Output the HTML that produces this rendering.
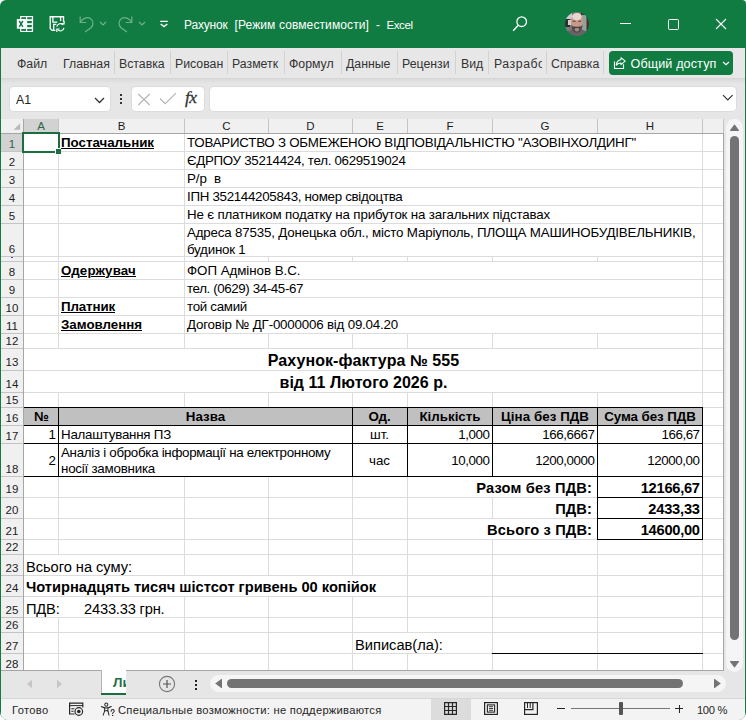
<!DOCTYPE html>
<html><head><meta charset="utf-8"><title>Excel</title>
<style>
html,body{margin:0;padding:0;}
body{width:746px;height:720px;overflow:hidden;background:#fff;font-family:"Liberation Sans",sans-serif;position:relative;}
#win{position:absolute;left:0;top:0;width:746px;height:720px;background:#107c41;border-radius:6px 4px 8px 8px;overflow:hidden;}
#win div, #win svg{box-sizing:border-box;}
</style></head><body><div id="win">
<div style="position:absolute;left:1px;top:48px;width:744px;height:672px;background:#e6e6e6;border-radius:0 0 6px 6px;"></div>
<div style="position:absolute;left:1px;top:48px;width:744px;height:30px;background:#e7e7e7;"></div>
<div style="position:absolute;left:1px;top:78px;width:744px;height:6px;background:linear-gradient(#d4d4d4,#dedede 35%,#e6e6e6);"></div>
<svg style="position:absolute;left:16px;top:15px" width="18" height="18" viewBox="0 0 18 18" shape-rendering="geometricPrecision">
<rect x="4.1" y="0.9" width="13" height="16" rx=".6" fill="#fff"/>
<g fill="#107c41">
<rect x="5.3" y="2.2" width="4.7" height="2"/><rect x="11.2" y="2.2" width="4.6" height="2"/>
<rect x="11.2" y="5.9" width="4.6" height="2.3"/>
<rect x="11.2" y="9.9" width="4.6" height="2.300"/>
<rect x="5.3" y="13.9" width="4.7" height="2"/><rect x="11.2" y="13.9" width="4.6" height="2"/>
</g>
<rect x=".8" y="4.1" width="8.7" height="9.6" fill="#fff"/>
<path d="M3.2 6l3.700 5.800M6.900 6l-3.700 5.800" stroke="#107c41" stroke-width="1.45" fill="none"/>
</svg>
<svg style="position:absolute;left:48px;top:15px" width="19" height="18" viewBox="0 0 19 18">
<path d="M7.400 15.350H4.200L2.200 13.400V1.750H15.550V7" fill="none" stroke="#fff" stroke-width="1.3"/>
<path d="M4.900 1.750V7.100H9.300M12.600 1.750V6" fill="none" stroke="#fff" stroke-width="1.3"/>
<path d="M5.700 15.300V9.300H8.300" fill="none" stroke="#fff" stroke-width="1.3"/>
<path d="M8.800 11.700A3.700 3.700 0 0 1 15.200 9.900M16 12.900A3.700 3.700 0 0 1 9.600 14.700" fill="none" stroke="#fff" stroke-width="1.15"/>
<path d="M16.100 5.900v2.900h-2.900M8.800 16.900v-2.900h2.900" fill="none" stroke="#fff" stroke-width="1.15"/>
</svg>
<svg style="position:absolute;left:78px;top:14px" width="18" height="20" viewBox="0 0 18 20">
<path d="M2.2 2.5v6h6" fill="none" stroke="#6fb08b" stroke-width="1.2"/>
<path d="M2.4 8.3C4.5 4.2 9.3 2.6 12.4 4.6c3.3 2.2 3.3 6.6 .6 9.2L7 18" fill="none" stroke="#6fb08b" stroke-width="1.2"/>
</svg>
<svg style="position:absolute;left:99px;top:21px" width="8" height="5" viewBox="0 0 8 5"><path d="M1 1l3 3 3-3" fill="none" stroke="#6fb08b" stroke-width="1.2"/></svg>
<svg style="position:absolute;left:116px;top:14px" width="18" height="20" viewBox="0 0 18 20">
<path d="M15.8 2.5v6h-6" fill="none" stroke="#6fb08b" stroke-width="1.2"/>
<path d="M15.6 8.3C13.5 4.2 8.7 2.6 5.6 4.6c-3.3 2.2-3.3 6.6-.6 9.2L11 18" fill="none" stroke="#6fb08b" stroke-width="1.2"/>
</svg>
<svg style="position:absolute;left:138px;top:21px" width="8" height="5" viewBox="0 0 8 5"><path d="M1 1l3 3 3-3" fill="none" stroke="#6fb08b" stroke-width="1.2"/></svg>
<svg style="position:absolute;left:159px;top:19px" width="10" height="9" viewBox="0 0 10 9">
<path d="M1.2 2.4h7.600" stroke="#fff" stroke-width="1.2"/><path d="M1.700 5l3.300 2.600 3.300-2.600" fill="none" stroke="#fff" stroke-width="1.5"/></svg>
<div style="position:absolute;top:15px;line-height:20px;height:20px;font-size:12px;white-space:pre;color:#fff;letter-spacing:-0.192px;left:184px;">Рахунок</div>
<div style="position:absolute;top:15px;line-height:20px;height:20px;font-size:12px;white-space:pre;color:#fff;letter-spacing:0.105px;left:234.5px;">[Режим совместимости]</div>
<div style="position:absolute;top:15px;line-height:20px;height:20px;font-size:12px;white-space:pre;color:#fff;left:376px;">-</div>
<div style="position:absolute;top:15px;line-height:20px;height:20px;font-size:11.6px;white-space:pre;color:#fff;letter-spacing:-0.472px;left:386.5px;">Excel</div>
<svg style="position:absolute;left:511px;top:15px" width="18" height="18" viewBox="0 0 18 18">
<circle cx="10.7" cy="6.7" r="4.8" fill="none" stroke="#fff" stroke-width="1.3"/><path d="M7.3 10.2L2.2 15.8" stroke="#fff" stroke-width="1.4"/></svg>
<svg style="position:absolute;left:565px;top:12px" width="24" height="24" viewBox="0 0 24 24">
<defs><clipPath id="av"><circle cx="12" cy="12" r="11.9"/></clipPath><filter id="bl" x="-20%" y="-20%" width="140%" height="140%"><feGaussianBlur stdDeviation="0.7"/></filter></defs>
<g clip-path="url(#av)"><g filter="url(#bl)">
<rect x="-2" y="-2" width="28" height="28" fill="#7b7a7c"/>
<rect x="-2" y="-2" width="9" height="9" fill="#c9ced3"/>
<rect x="-1" y="7" width="6" height="8" fill="#2e2e30"/>
<rect x="3" y="8" width="3" height="5" fill="#d0d0d0"/>
<rect x="17" y="2" width="5" height="17" fill="#93a19f"/>
<rect x="21.5" y="4" width="4" height="16" fill="#4d2f26"/>
<rect x="16" y="-1" width="6" height="4" fill="#3a3a3c"/>
<ellipse cx="12" cy="25" rx="13" ry="8" fill="#696468"/>
<ellipse cx="11.9" cy="10.5" rx="6.1" ry="9.6" fill="#c69a88"/>
<ellipse cx="11.9" cy="4.6" rx="4.8" ry="3.6" fill="#ead6ce"/>
<path d="M6.2 12.500c.2 5.500 2.600 8.200 5.700 8.200s5.500-2.700 5.700-8.200c-1 2-2.600 2.300-5.700 2.300s-4.700-.3-5.700-2.300z" fill="#54494a"/>
<ellipse cx="11.9" cy="17.6" rx="2.200" ry="2" fill="#a08c86"/>
<path d="M8.600 14.900c2 .9 4.600.9 6.600 0" stroke="#3c3030" stroke-width=".8" fill="none"/>
<path d="M7.600 9.300h3M13.200 9.300h3" stroke="#5a4038" stroke-width="1.100"/>
</g></g></svg>
<div style="position:absolute;left:620px;top:23px;width:11px;height:1px;background:#fff;"></div>
<div style="position:absolute;left:668px;top:19px;width:11px;height:11px;border:1px solid #fff;border-radius:1.5px"></div>
<svg style="position:absolute;left:715px;top:18px" width="12" height="12" viewBox="0 0 12 12"><path d="M1 1l10 10M11 1L1 11" stroke="#fff" stroke-width="1.1"/></svg>
<div style="position:absolute;top:54px;line-height:20px;height:20px;font-size:12.3px;white-space:pre;color:#333;left:17px;width:31px;overflow:hidden;">Файл</div>
<div style="position:absolute;top:54px;line-height:20px;height:20px;font-size:12.3px;white-space:pre;color:#333;left:63px;width:48px;overflow:hidden;">Главная</div>
<div style="position:absolute;top:54px;line-height:20px;height:20px;font-size:12.3px;white-space:pre;color:#333;left:119px;width:46px;overflow:hidden;">Вставка</div>
<div style="position:absolute;top:54px;line-height:20px;height:20px;font-size:12.3px;white-space:pre;color:#333;left:175px;width:50px;overflow:hidden;">Рисован</div>
<div style="position:absolute;top:54px;line-height:20px;height:20px;font-size:12.3px;white-space:pre;color:#333;left:232px;width:48px;overflow:hidden;">Разметк</div>
<div style="position:absolute;top:54px;line-height:20px;height:20px;font-size:12.3px;white-space:pre;color:#333;left:289px;width:48px;overflow:hidden;">Формул</div>
<div style="position:absolute;top:54px;line-height:20px;height:20px;font-size:12.3px;white-space:pre;color:#333;left:346px;width:46px;overflow:hidden;">Данные</div>
<div style="position:absolute;top:54px;line-height:20px;height:20px;font-size:12.3px;white-space:pre;color:#333;left:402px;width:49px;overflow:hidden;">Рецензи</div>
<div style="position:absolute;top:54px;line-height:20px;height:20px;font-size:12.3px;white-space:pre;color:#333;left:461px;width:23px;overflow:hidden;">Вид</div>
<div style="position:absolute;top:54px;line-height:20px;height:20px;font-size:12.3px;white-space:pre;color:#333;letter-spacing:0.542px;left:494px;width:48px;overflow:hidden;">Разрабо</div>
<div style="position:absolute;top:54px;line-height:20px;height:20px;font-size:12.3px;white-space:pre;color:#333;left:551px;width:50px;overflow:hidden;">Справка</div>
<div style="position:absolute;left:114px;top:51px;width:1px;height:23px;background:#d2d2d2;"></div>
<div style="position:absolute;left:170px;top:51px;width:1px;height:23px;background:#d2d2d2;"></div>
<div style="position:absolute;left:227px;top:51px;width:1px;height:23px;background:#d2d2d2;"></div>
<div style="position:absolute;left:284px;top:51px;width:1px;height:23px;background:#d2d2d2;"></div>
<div style="position:absolute;left:341px;top:51px;width:1px;height:23px;background:#d2d2d2;"></div>
<div style="position:absolute;left:397px;top:51px;width:1px;height:23px;background:#d2d2d2;"></div>
<div style="position:absolute;left:455px;top:51px;width:1px;height:23px;background:#d2d2d2;"></div>
<div style="position:absolute;left:488px;top:51px;width:1px;height:23px;background:#d2d2d2;"></div>
<div style="position:absolute;left:546px;top:51px;width:1px;height:23px;background:#d2d2d2;"></div>
<div style="position:absolute;left:603px;top:51px;width:1px;height:23px;background:#d2d2d2;"></div>
<div style="position:absolute;left:609px;top:51px;width:124px;height:24px;background:#107c41;border-radius:4px;"></div>
<svg style="position:absolute;left:613px;top:56px" width="14" height="14" viewBox="0 0 14 14">
<path d="M1.5 5.4V12.5H10.5V8.2" fill="none" stroke="#fff" stroke-width="1.15"/>
<path d="M8 1.7L12.2 5.2 8 8.6V6.9C6 6.9 4.5 7.6 3.3 9.1 3.5 6.1 5.2 4.1 8 3.7Z" fill="none" stroke="#fff" stroke-width="1.05" stroke-linejoin="round"/></svg>
<div style="position:absolute;top:54px;line-height:20px;height:20px;font-size:12.6px;white-space:pre;color:#fff;letter-spacing:0.115px;left:630.5px;">Общий доступ</div>
<svg style="position:absolute;left:722px;top:61px" width="8" height="5" viewBox="0 0 8 5"><path d="M1 1l3 2.8 3-2.8" fill="none" stroke="#fff" stroke-width="1.2"/></svg>
<div style="position:absolute;left:10px;top:87px;width:100px;height:24px;background:#fff;border-radius:4px;box-shadow:0 0 0 1px #dcdcdc;"></div>
<div style="position:absolute;top:90px;line-height:20px;height:20px;font-size:12.3px;white-space:pre;color:#222;left:16px;">A1</div>
<svg style="position:absolute;left:94px;top:97px" width="11" height="7" viewBox="0 0 11 7"><path d="M1 1l4.5 4.5 4.5-4.5" fill="none" stroke="#333" stroke-width="1.3"/></svg>
<div style="position:absolute;left:120px;top:94px;width:2px;height:2px;background:#333;"></div>
<div style="position:absolute;left:120px;top:98px;width:2px;height:2px;background:#333;"></div>
<div style="position:absolute;left:120px;top:102px;width:2px;height:2px;background:#333;"></div>
<div style="position:absolute;left:132px;top:87px;width:72px;height:24px;background:#fff;border-radius:4px;box-shadow:0 0 0 1px #dcdcdc;"></div>
<svg style="position:absolute;left:137px;top:93px" width="14" height="13" viewBox="0 0 14 13"><path d="M1.3 1l11.4 11M12.7 1L1.3 12" stroke="#b4b4b4" stroke-width="1.1"/></svg>
<svg style="position:absolute;left:159px;top:92px" width="18" height="13" viewBox="0 0 18 13"><path d="M1 6.5l5.2 5.2L17 1.2" fill="none" stroke="#b4b4b4" stroke-width="1.1"/></svg>
<div style="position:absolute;left:185px;top:85px;width:18px;height:24px;line-height:24px;font-family:'Liberation Serif',serif;font-style:italic;font-size:17.5px;color:#333;letter-spacing:-.5px;-webkit-text-stroke:.3px #333;">fx</div>
<div style="position:absolute;left:210px;top:87px;width:526px;height:24px;background:#fff;border-radius:4px;box-shadow:0 0 0 1px #dcdcdc;"></div>
<svg style="position:absolute;left:722px;top:94px" width="12" height="8" viewBox="0 0 12 8"><path d="M1 1.2l4.8 4.8 4.8-4.800" fill="none" stroke="#333" stroke-width="1.2"/></svg>
<div style="position:absolute;left:1px;top:119px;width:723px;height:14px;background:#f0f0f0;"></div>
<div style="position:absolute;left:1px;top:133px;width:22px;height:538px;background:#f0f0f0;"></div>
<div style="position:absolute;left:24px;top:134px;width:699px;height:537px;background:#fff;"></div>
<div style="position:absolute;left:24px;top:119px;width:34px;height:14px;background:#d2d2d2;"></div>
<div style="position:absolute;left:1px;top:134px;width:22px;height:17px;background:#d2d2d2;"></div>
<svg style="position:absolute;left:11px;top:122px" width="10" height="9" viewBox="0 0 10 9"><path d="M9.200 1.300V7.800H2.600z" fill="#b9b9b9"/></svg>
<div style="position:absolute;left:24px;top:151px;width:699px;height:1px;background:#dcdcdc;"></div>
<div style="position:absolute;left:24px;top:169px;width:699px;height:1px;background:#dcdcdc;"></div>
<div style="position:absolute;left:24px;top:187px;width:699px;height:1px;background:#dcdcdc;"></div>
<div style="position:absolute;left:24px;top:205px;width:699px;height:1px;background:#dcdcdc;"></div>
<div style="position:absolute;left:24px;top:223px;width:699px;height:1px;background:#dcdcdc;"></div>
<div style="position:absolute;left:24px;top:256px;width:699px;height:1px;background:#dcdcdc;"></div>
<div style="position:absolute;left:24px;top:261px;width:699px;height:1px;background:#dcdcdc;"></div>
<div style="position:absolute;left:24px;top:279px;width:699px;height:1px;background:#dcdcdc;"></div>
<div style="position:absolute;left:24px;top:297px;width:699px;height:1px;background:#dcdcdc;"></div>
<div style="position:absolute;left:24px;top:315px;width:699px;height:1px;background:#dcdcdc;"></div>
<div style="position:absolute;left:24px;top:333px;width:699px;height:1px;background:#dcdcdc;"></div>
<div style="position:absolute;left:24px;top:348px;width:699px;height:1px;background:#dcdcdc;"></div>
<div style="position:absolute;left:24px;top:370px;width:699px;height:1px;background:#dcdcdc;"></div>
<div style="position:absolute;left:24px;top:392px;width:699px;height:1px;background:#dcdcdc;"></div>
<div style="position:absolute;left:24px;top:407px;width:699px;height:1px;background:#dcdcdc;"></div>
<div style="position:absolute;left:24px;top:425px;width:699px;height:1px;background:#dcdcdc;"></div>
<div style="position:absolute;left:24px;top:443px;width:699px;height:1px;background:#dcdcdc;"></div>
<div style="position:absolute;left:24px;top:476px;width:699px;height:1px;background:#dcdcdc;"></div>
<div style="position:absolute;left:24px;top:497px;width:699px;height:1px;background:#dcdcdc;"></div>
<div style="position:absolute;left:24px;top:518px;width:699px;height:1px;background:#dcdcdc;"></div>
<div style="position:absolute;left:24px;top:539px;width:699px;height:1px;background:#dcdcdc;"></div>
<div style="position:absolute;left:24px;top:554px;width:699px;height:1px;background:#dcdcdc;"></div>
<div style="position:absolute;left:24px;top:575px;width:699px;height:1px;background:#dcdcdc;"></div>
<div style="position:absolute;left:24px;top:596px;width:699px;height:1px;background:#dcdcdc;"></div>
<div style="position:absolute;left:24px;top:617px;width:699px;height:1px;background:#dcdcdc;"></div>
<div style="position:absolute;left:24px;top:632px;width:699px;height:1px;background:#dcdcdc;"></div>
<div style="position:absolute;left:24px;top:653px;width:699px;height:1px;background:#dcdcdc;"></div>
<div style="position:absolute;left:58px;top:134px;width:1px;height:18px;background:#dcdcdc;"></div>
<div style="position:absolute;left:58px;top:152px;width:1px;height:18px;background:#dcdcdc;"></div>
<div style="position:absolute;left:58px;top:170px;width:1px;height:18px;background:#dcdcdc;"></div>
<div style="position:absolute;left:58px;top:188px;width:1px;height:18px;background:#dcdcdc;"></div>
<div style="position:absolute;left:58px;top:206px;width:1px;height:18px;background:#dcdcdc;"></div>
<div style="position:absolute;left:58px;top:224px;width:1px;height:33px;background:#dcdcdc;"></div>
<div style="position:absolute;left:58px;top:257px;width:1px;height:5px;background:#dcdcdc;"></div>
<div style="position:absolute;left:58px;top:262px;width:1px;height:18px;background:#dcdcdc;"></div>
<div style="position:absolute;left:58px;top:280px;width:1px;height:18px;background:#dcdcdc;"></div>
<div style="position:absolute;left:58px;top:298px;width:1px;height:18px;background:#dcdcdc;"></div>
<div style="position:absolute;left:58px;top:316px;width:1px;height:18px;background:#dcdcdc;"></div>
<div style="position:absolute;left:58px;top:334px;width:1px;height:15px;background:#dcdcdc;"></div>
<div style="position:absolute;left:58px;top:393px;width:1px;height:15px;background:#dcdcdc;"></div>
<div style="position:absolute;left:58px;top:408px;width:1px;height:18px;background:#dcdcdc;"></div>
<div style="position:absolute;left:58px;top:426px;width:1px;height:18px;background:#dcdcdc;"></div>
<div style="position:absolute;left:58px;top:444px;width:1px;height:33px;background:#dcdcdc;"></div>
<div style="position:absolute;left:58px;top:477px;width:1px;height:21px;background:#dcdcdc;"></div>
<div style="position:absolute;left:58px;top:498px;width:1px;height:21px;background:#dcdcdc;"></div>
<div style="position:absolute;left:58px;top:519px;width:1px;height:21px;background:#dcdcdc;"></div>
<div style="position:absolute;left:58px;top:540px;width:1px;height:15px;background:#dcdcdc;"></div>
<div style="position:absolute;left:58px;top:618px;width:1px;height:15px;background:#dcdcdc;"></div>
<div style="position:absolute;left:58px;top:633px;width:1px;height:21px;background:#dcdcdc;"></div>
<div style="position:absolute;left:58px;top:654px;width:1px;height:17px;background:#dcdcdc;"></div>
<div style="position:absolute;left:184px;top:134px;width:1px;height:18px;background:#dcdcdc;"></div>
<div style="position:absolute;left:184px;top:152px;width:1px;height:18px;background:#dcdcdc;"></div>
<div style="position:absolute;left:184px;top:170px;width:1px;height:18px;background:#dcdcdc;"></div>
<div style="position:absolute;left:184px;top:188px;width:1px;height:18px;background:#dcdcdc;"></div>
<div style="position:absolute;left:184px;top:206px;width:1px;height:18px;background:#dcdcdc;"></div>
<div style="position:absolute;left:184px;top:224px;width:1px;height:33px;background:#dcdcdc;"></div>
<div style="position:absolute;left:184px;top:257px;width:1px;height:5px;background:#dcdcdc;"></div>
<div style="position:absolute;left:184px;top:262px;width:1px;height:18px;background:#dcdcdc;"></div>
<div style="position:absolute;left:184px;top:280px;width:1px;height:18px;background:#dcdcdc;"></div>
<div style="position:absolute;left:184px;top:298px;width:1px;height:18px;background:#dcdcdc;"></div>
<div style="position:absolute;left:184px;top:316px;width:1px;height:18px;background:#dcdcdc;"></div>
<div style="position:absolute;left:184px;top:334px;width:1px;height:15px;background:#dcdcdc;"></div>
<div style="position:absolute;left:184px;top:393px;width:1px;height:15px;background:#dcdcdc;"></div>
<div style="position:absolute;left:184px;top:477px;width:1px;height:21px;background:#dcdcdc;"></div>
<div style="position:absolute;left:184px;top:498px;width:1px;height:21px;background:#dcdcdc;"></div>
<div style="position:absolute;left:184px;top:519px;width:1px;height:21px;background:#dcdcdc;"></div>
<div style="position:absolute;left:184px;top:540px;width:1px;height:15px;background:#dcdcdc;"></div>
<div style="position:absolute;left:184px;top:555px;width:1px;height:21px;background:#dcdcdc;"></div>
<div style="position:absolute;left:184px;top:597px;width:1px;height:21px;background:#dcdcdc;"></div>
<div style="position:absolute;left:184px;top:618px;width:1px;height:15px;background:#dcdcdc;"></div>
<div style="position:absolute;left:184px;top:633px;width:1px;height:21px;background:#dcdcdc;"></div>
<div style="position:absolute;left:184px;top:654px;width:1px;height:17px;background:#dcdcdc;"></div>
<div style="position:absolute;left:268px;top:257px;width:1px;height:5px;background:#dcdcdc;"></div>
<div style="position:absolute;left:268px;top:334px;width:1px;height:15px;background:#dcdcdc;"></div>
<div style="position:absolute;left:268px;top:393px;width:1px;height:15px;background:#dcdcdc;"></div>
<div style="position:absolute;left:268px;top:477px;width:1px;height:21px;background:#dcdcdc;"></div>
<div style="position:absolute;left:268px;top:498px;width:1px;height:21px;background:#dcdcdc;"></div>
<div style="position:absolute;left:268px;top:519px;width:1px;height:21px;background:#dcdcdc;"></div>
<div style="position:absolute;left:268px;top:540px;width:1px;height:15px;background:#dcdcdc;"></div>
<div style="position:absolute;left:268px;top:555px;width:1px;height:21px;background:#dcdcdc;"></div>
<div style="position:absolute;left:268px;top:597px;width:1px;height:21px;background:#dcdcdc;"></div>
<div style="position:absolute;left:268px;top:618px;width:1px;height:15px;background:#dcdcdc;"></div>
<div style="position:absolute;left:268px;top:633px;width:1px;height:21px;background:#dcdcdc;"></div>
<div style="position:absolute;left:268px;top:654px;width:1px;height:17px;background:#dcdcdc;"></div>
<div style="position:absolute;left:352px;top:257px;width:1px;height:5px;background:#dcdcdc;"></div>
<div style="position:absolute;left:352px;top:334px;width:1px;height:15px;background:#dcdcdc;"></div>
<div style="position:absolute;left:352px;top:393px;width:1px;height:15px;background:#dcdcdc;"></div>
<div style="position:absolute;left:352px;top:408px;width:1px;height:18px;background:#dcdcdc;"></div>
<div style="position:absolute;left:352px;top:426px;width:1px;height:18px;background:#dcdcdc;"></div>
<div style="position:absolute;left:352px;top:444px;width:1px;height:33px;background:#dcdcdc;"></div>
<div style="position:absolute;left:352px;top:477px;width:1px;height:21px;background:#dcdcdc;"></div>
<div style="position:absolute;left:352px;top:498px;width:1px;height:21px;background:#dcdcdc;"></div>
<div style="position:absolute;left:352px;top:519px;width:1px;height:21px;background:#dcdcdc;"></div>
<div style="position:absolute;left:352px;top:540px;width:1px;height:15px;background:#dcdcdc;"></div>
<div style="position:absolute;left:352px;top:555px;width:1px;height:21px;background:#dcdcdc;"></div>
<div style="position:absolute;left:352px;top:597px;width:1px;height:21px;background:#dcdcdc;"></div>
<div style="position:absolute;left:352px;top:618px;width:1px;height:15px;background:#dcdcdc;"></div>
<div style="position:absolute;left:352px;top:633px;width:1px;height:21px;background:#dcdcdc;"></div>
<div style="position:absolute;left:352px;top:654px;width:1px;height:17px;background:#dcdcdc;"></div>
<div style="position:absolute;left:407px;top:257px;width:1px;height:5px;background:#dcdcdc;"></div>
<div style="position:absolute;left:407px;top:334px;width:1px;height:15px;background:#dcdcdc;"></div>
<div style="position:absolute;left:407px;top:393px;width:1px;height:15px;background:#dcdcdc;"></div>
<div style="position:absolute;left:407px;top:408px;width:1px;height:18px;background:#dcdcdc;"></div>
<div style="position:absolute;left:407px;top:426px;width:1px;height:18px;background:#dcdcdc;"></div>
<div style="position:absolute;left:407px;top:444px;width:1px;height:33px;background:#dcdcdc;"></div>
<div style="position:absolute;left:407px;top:477px;width:1px;height:21px;background:#dcdcdc;"></div>
<div style="position:absolute;left:407px;top:498px;width:1px;height:21px;background:#dcdcdc;"></div>
<div style="position:absolute;left:407px;top:519px;width:1px;height:21px;background:#dcdcdc;"></div>
<div style="position:absolute;left:407px;top:540px;width:1px;height:15px;background:#dcdcdc;"></div>
<div style="position:absolute;left:407px;top:555px;width:1px;height:21px;background:#dcdcdc;"></div>
<div style="position:absolute;left:407px;top:576px;width:1px;height:21px;background:#dcdcdc;"></div>
<div style="position:absolute;left:407px;top:597px;width:1px;height:21px;background:#dcdcdc;"></div>
<div style="position:absolute;left:407px;top:618px;width:1px;height:15px;background:#dcdcdc;"></div>
<div style="position:absolute;left:407px;top:654px;width:1px;height:17px;background:#dcdcdc;"></div>
<div style="position:absolute;left:492px;top:257px;width:1px;height:5px;background:#dcdcdc;"></div>
<div style="position:absolute;left:492px;top:334px;width:1px;height:15px;background:#dcdcdc;"></div>
<div style="position:absolute;left:492px;top:393px;width:1px;height:15px;background:#dcdcdc;"></div>
<div style="position:absolute;left:492px;top:408px;width:1px;height:18px;background:#dcdcdc;"></div>
<div style="position:absolute;left:492px;top:426px;width:1px;height:18px;background:#dcdcdc;"></div>
<div style="position:absolute;left:492px;top:444px;width:1px;height:33px;background:#dcdcdc;"></div>
<div style="position:absolute;left:492px;top:498px;width:1px;height:21px;background:#dcdcdc;"></div>
<div style="position:absolute;left:492px;top:540px;width:1px;height:15px;background:#dcdcdc;"></div>
<div style="position:absolute;left:492px;top:555px;width:1px;height:21px;background:#dcdcdc;"></div>
<div style="position:absolute;left:492px;top:576px;width:1px;height:21px;background:#dcdcdc;"></div>
<div style="position:absolute;left:492px;top:597px;width:1px;height:21px;background:#dcdcdc;"></div>
<div style="position:absolute;left:492px;top:618px;width:1px;height:15px;background:#dcdcdc;"></div>
<div style="position:absolute;left:492px;top:633px;width:1px;height:21px;background:#dcdcdc;"></div>
<div style="position:absolute;left:492px;top:654px;width:1px;height:17px;background:#dcdcdc;"></div>
<div style="position:absolute;left:597px;top:257px;width:1px;height:5px;background:#dcdcdc;"></div>
<div style="position:absolute;left:597px;top:334px;width:1px;height:15px;background:#dcdcdc;"></div>
<div style="position:absolute;left:597px;top:393px;width:1px;height:15px;background:#dcdcdc;"></div>
<div style="position:absolute;left:597px;top:408px;width:1px;height:18px;background:#dcdcdc;"></div>
<div style="position:absolute;left:597px;top:426px;width:1px;height:18px;background:#dcdcdc;"></div>
<div style="position:absolute;left:597px;top:444px;width:1px;height:33px;background:#dcdcdc;"></div>
<div style="position:absolute;left:597px;top:477px;width:1px;height:21px;background:#dcdcdc;"></div>
<div style="position:absolute;left:597px;top:498px;width:1px;height:21px;background:#dcdcdc;"></div>
<div style="position:absolute;left:597px;top:519px;width:1px;height:21px;background:#dcdcdc;"></div>
<div style="position:absolute;left:597px;top:540px;width:1px;height:15px;background:#dcdcdc;"></div>
<div style="position:absolute;left:597px;top:555px;width:1px;height:21px;background:#dcdcdc;"></div>
<div style="position:absolute;left:597px;top:576px;width:1px;height:21px;background:#dcdcdc;"></div>
<div style="position:absolute;left:597px;top:597px;width:1px;height:21px;background:#dcdcdc;"></div>
<div style="position:absolute;left:597px;top:618px;width:1px;height:15px;background:#dcdcdc;"></div>
<div style="position:absolute;left:597px;top:633px;width:1px;height:21px;background:#dcdcdc;"></div>
<div style="position:absolute;left:597px;top:654px;width:1px;height:17px;background:#dcdcdc;"></div>
<div style="position:absolute;left:702px;top:134px;width:1px;height:18px;background:#dcdcdc;"></div>
<div style="position:absolute;left:702px;top:152px;width:1px;height:18px;background:#dcdcdc;"></div>
<div style="position:absolute;left:702px;top:170px;width:1px;height:18px;background:#dcdcdc;"></div>
<div style="position:absolute;left:702px;top:188px;width:1px;height:18px;background:#dcdcdc;"></div>
<div style="position:absolute;left:702px;top:206px;width:1px;height:18px;background:#dcdcdc;"></div>
<div style="position:absolute;left:702px;top:224px;width:1px;height:33px;background:#dcdcdc;"></div>
<div style="position:absolute;left:702px;top:257px;width:1px;height:5px;background:#dcdcdc;"></div>
<div style="position:absolute;left:702px;top:262px;width:1px;height:18px;background:#dcdcdc;"></div>
<div style="position:absolute;left:702px;top:280px;width:1px;height:18px;background:#dcdcdc;"></div>
<div style="position:absolute;left:702px;top:298px;width:1px;height:18px;background:#dcdcdc;"></div>
<div style="position:absolute;left:702px;top:316px;width:1px;height:18px;background:#dcdcdc;"></div>
<div style="position:absolute;left:702px;top:334px;width:1px;height:15px;background:#dcdcdc;"></div>
<div style="position:absolute;left:702px;top:349px;width:1px;height:22px;background:#dcdcdc;"></div>
<div style="position:absolute;left:702px;top:371px;width:1px;height:22px;background:#dcdcdc;"></div>
<div style="position:absolute;left:702px;top:393px;width:1px;height:15px;background:#dcdcdc;"></div>
<div style="position:absolute;left:702px;top:408px;width:1px;height:18px;background:#dcdcdc;"></div>
<div style="position:absolute;left:702px;top:426px;width:1px;height:18px;background:#dcdcdc;"></div>
<div style="position:absolute;left:702px;top:444px;width:1px;height:33px;background:#dcdcdc;"></div>
<div style="position:absolute;left:702px;top:477px;width:1px;height:21px;background:#dcdcdc;"></div>
<div style="position:absolute;left:702px;top:498px;width:1px;height:21px;background:#dcdcdc;"></div>
<div style="position:absolute;left:702px;top:519px;width:1px;height:21px;background:#dcdcdc;"></div>
<div style="position:absolute;left:702px;top:540px;width:1px;height:15px;background:#dcdcdc;"></div>
<div style="position:absolute;left:702px;top:555px;width:1px;height:21px;background:#dcdcdc;"></div>
<div style="position:absolute;left:702px;top:576px;width:1px;height:21px;background:#dcdcdc;"></div>
<div style="position:absolute;left:702px;top:597px;width:1px;height:21px;background:#dcdcdc;"></div>
<div style="position:absolute;left:702px;top:618px;width:1px;height:15px;background:#dcdcdc;"></div>
<div style="position:absolute;left:702px;top:633px;width:1px;height:21px;background:#dcdcdc;"></div>
<div style="position:absolute;left:702px;top:654px;width:1px;height:17px;background:#dcdcdc;"></div>
<div style="position:absolute;left:1px;top:133px;width:723px;height:1px;background:#a6a6a6;"></div>
<div style="position:absolute;left:23px;top:119px;width:1px;height:552px;background:#a6a6a6;"></div>
<div style="position:absolute;left:58px;top:119px;width:1px;height:14px;background:#c4c4c4;"></div>
<div style="position:absolute;left:184px;top:119px;width:1px;height:14px;background:#c4c4c4;"></div>
<div style="position:absolute;left:268px;top:119px;width:1px;height:14px;background:#c4c4c4;"></div>
<div style="position:absolute;left:352px;top:119px;width:1px;height:14px;background:#c4c4c4;"></div>
<div style="position:absolute;left:407px;top:119px;width:1px;height:14px;background:#c4c4c4;"></div>
<div style="position:absolute;left:492px;top:119px;width:1px;height:14px;background:#c4c4c4;"></div>
<div style="position:absolute;left:597px;top:119px;width:1px;height:14px;background:#c4c4c4;"></div>
<div style="position:absolute;left:702px;top:119px;width:1px;height:14px;background:#c4c4c4;"></div>
<div style="position:absolute;left:1px;top:151px;width:22px;height:1px;background:#c4c4c4;"></div>
<div style="position:absolute;left:1px;top:169px;width:22px;height:1px;background:#c4c4c4;"></div>
<div style="position:absolute;left:1px;top:187px;width:22px;height:1px;background:#c4c4c4;"></div>
<div style="position:absolute;left:1px;top:205px;width:22px;height:1px;background:#c4c4c4;"></div>
<div style="position:absolute;left:1px;top:223px;width:22px;height:1px;background:#c4c4c4;"></div>
<div style="position:absolute;left:1px;top:256px;width:22px;height:1px;background:#c4c4c4;"></div>
<div style="position:absolute;left:1px;top:261px;width:22px;height:1px;background:#c4c4c4;"></div>
<div style="position:absolute;left:1px;top:279px;width:22px;height:1px;background:#c4c4c4;"></div>
<div style="position:absolute;left:1px;top:297px;width:22px;height:1px;background:#c4c4c4;"></div>
<div style="position:absolute;left:1px;top:315px;width:22px;height:1px;background:#c4c4c4;"></div>
<div style="position:absolute;left:1px;top:333px;width:22px;height:1px;background:#c4c4c4;"></div>
<div style="position:absolute;left:1px;top:348px;width:22px;height:1px;background:#c4c4c4;"></div>
<div style="position:absolute;left:1px;top:370px;width:22px;height:1px;background:#c4c4c4;"></div>
<div style="position:absolute;left:1px;top:392px;width:22px;height:1px;background:#c4c4c4;"></div>
<div style="position:absolute;left:1px;top:407px;width:22px;height:1px;background:#c4c4c4;"></div>
<div style="position:absolute;left:1px;top:425px;width:22px;height:1px;background:#c4c4c4;"></div>
<div style="position:absolute;left:1px;top:443px;width:22px;height:1px;background:#c4c4c4;"></div>
<div style="position:absolute;left:1px;top:476px;width:22px;height:1px;background:#c4c4c4;"></div>
<div style="position:absolute;left:1px;top:497px;width:22px;height:1px;background:#c4c4c4;"></div>
<div style="position:absolute;left:1px;top:518px;width:22px;height:1px;background:#c4c4c4;"></div>
<div style="position:absolute;left:1px;top:539px;width:22px;height:1px;background:#c4c4c4;"></div>
<div style="position:absolute;left:1px;top:554px;width:22px;height:1px;background:#c4c4c4;"></div>
<div style="position:absolute;left:1px;top:575px;width:22px;height:1px;background:#c4c4c4;"></div>
<div style="position:absolute;left:1px;top:596px;width:22px;height:1px;background:#c4c4c4;"></div>
<div style="position:absolute;left:1px;top:617px;width:22px;height:1px;background:#c4c4c4;"></div>
<div style="position:absolute;left:1px;top:632px;width:22px;height:1px;background:#c4c4c4;"></div>
<div style="position:absolute;left:1px;top:653px;width:22px;height:1px;background:#c4c4c4;"></div>
<div style="position:absolute;left:723px;top:133px;width:1px;height:538px;background:#a6a6a6;"></div>
<div style="position:absolute;left:723px;top:119px;width:1px;height:14px;background:#c4c4c4;"></div>
<div style="position:absolute;left:1px;top:670px;width:723px;height:1px;background:#a6a6a6;"></div>
<div style="position:absolute;top:116px;line-height:20px;height:20px;font-size:11.5px;white-space:pre;color:#2b6647;left:-159px;width:400px;text-align:center;">A</div>
<div style="position:absolute;top:116px;line-height:20px;height:20px;font-size:11.5px;white-space:pre;color:#1c1c1c;left:-78.5px;width:400px;text-align:center;">B</div>
<div style="position:absolute;top:116px;line-height:20px;height:20px;font-size:11.5px;white-space:pre;color:#1c1c1c;left:26.5px;width:400px;text-align:center;">C</div>
<div style="position:absolute;top:116px;line-height:20px;height:20px;font-size:11.5px;white-space:pre;color:#1c1c1c;left:110.5px;width:400px;text-align:center;">D</div>
<div style="position:absolute;top:116px;line-height:20px;height:20px;font-size:11.5px;white-space:pre;color:#1c1c1c;left:180px;width:400px;text-align:center;">E</div>
<div style="position:absolute;top:116px;line-height:20px;height:20px;font-size:11.5px;white-space:pre;color:#1c1c1c;left:250px;width:400px;text-align:center;">F</div>
<div style="position:absolute;top:116px;line-height:20px;height:20px;font-size:11.5px;white-space:pre;color:#1c1c1c;left:345px;width:400px;text-align:center;">G</div>
<div style="position:absolute;top:116px;line-height:20px;height:20px;font-size:11.5px;white-space:pre;color:#1c1c1c;left:450px;width:400px;text-align:center;">H</div>
<div style="position:absolute;top:134px;line-height:20px;height:20px;font-size:11.5px;white-space:pre;color:#2b6647;left:-188px;width:400px;text-align:center;">1</div>
<div style="position:absolute;top:152px;line-height:20px;height:20px;font-size:11.5px;white-space:pre;color:#1c1c1c;left:-188px;width:400px;text-align:center;">2</div>
<div style="position:absolute;top:170px;line-height:20px;height:20px;font-size:11.5px;white-space:pre;color:#1c1c1c;left:-188px;width:400px;text-align:center;">3</div>
<div style="position:absolute;top:188px;line-height:20px;height:20px;font-size:11.5px;white-space:pre;color:#1c1c1c;left:-188px;width:400px;text-align:center;">4</div>
<div style="position:absolute;top:206px;line-height:20px;height:20px;font-size:11.5px;white-space:pre;color:#1c1c1c;left:-188px;width:400px;text-align:center;">5</div>
<div style="position:absolute;top:239px;line-height:20px;height:20px;font-size:11.5px;white-space:pre;color:#1c1c1c;left:-188px;width:400px;text-align:center;">6</div>
<div style="position:absolute;top:262px;line-height:20px;height:20px;font-size:11.5px;white-space:pre;color:#1c1c1c;left:-188px;width:400px;text-align:center;">8</div>
<div style="position:absolute;top:280px;line-height:20px;height:20px;font-size:11.5px;white-space:pre;color:#1c1c1c;left:-188px;width:400px;text-align:center;">9</div>
<div style="position:absolute;top:298px;line-height:20px;height:20px;font-size:11.5px;white-space:pre;color:#1c1c1c;left:-188px;width:400px;text-align:center;">10</div>
<div style="position:absolute;top:316px;line-height:20px;height:20px;font-size:11.5px;white-space:pre;color:#1c1c1c;left:-188px;width:400px;text-align:center;">11</div>
<div style="position:absolute;top:331px;line-height:20px;height:20px;font-size:11.5px;white-space:pre;color:#1c1c1c;left:-188px;width:400px;text-align:center;">12</div>
<div style="position:absolute;top:352px;line-height:20px;height:20px;font-size:11.5px;white-space:pre;color:#1c1c1c;left:-188px;width:400px;text-align:center;">13</div>
<div style="position:absolute;top:374px;line-height:20px;height:20px;font-size:11.5px;white-space:pre;color:#1c1c1c;left:-188px;width:400px;text-align:center;">14</div>
<div style="position:absolute;top:390px;line-height:20px;height:20px;font-size:11.5px;white-space:pre;color:#1c1c1c;left:-188px;width:400px;text-align:center;">15</div>
<div style="position:absolute;top:408px;line-height:20px;height:20px;font-size:11.5px;white-space:pre;color:#1c1c1c;left:-188px;width:400px;text-align:center;">16</div>
<div style="position:absolute;top:426px;line-height:20px;height:20px;font-size:11.5px;white-space:pre;color:#1c1c1c;left:-188px;width:400px;text-align:center;">17</div>
<div style="position:absolute;top:459px;line-height:20px;height:20px;font-size:11.5px;white-space:pre;color:#1c1c1c;left:-188px;width:400px;text-align:center;">18</div>
<div style="position:absolute;top:479px;line-height:20px;height:20px;font-size:11.5px;white-space:pre;color:#1c1c1c;left:-188px;width:400px;text-align:center;">19</div>
<div style="position:absolute;top:500px;line-height:20px;height:20px;font-size:11.5px;white-space:pre;color:#1c1c1c;left:-188px;width:400px;text-align:center;">20</div>
<div style="position:absolute;top:521px;line-height:20px;height:20px;font-size:11.5px;white-space:pre;color:#1c1c1c;left:-188px;width:400px;text-align:center;">21</div>
<div style="position:absolute;top:537px;line-height:20px;height:20px;font-size:11.5px;white-space:pre;color:#1c1c1c;left:-188px;width:400px;text-align:center;">22</div>
<div style="position:absolute;top:558px;line-height:20px;height:20px;font-size:11.5px;white-space:pre;color:#1c1c1c;left:-188px;width:400px;text-align:center;">23</div>
<div style="position:absolute;top:578px;line-height:20px;height:20px;font-size:11.5px;white-space:pre;color:#1c1c1c;left:-188px;width:400px;text-align:center;">24</div>
<div style="position:absolute;top:600px;line-height:20px;height:20px;font-size:11.5px;white-space:pre;color:#1c1c1c;left:-188px;width:400px;text-align:center;">25</div>
<div style="position:absolute;top:615px;line-height:20px;height:20px;font-size:11.5px;white-space:pre;color:#1c1c1c;left:-188px;width:400px;text-align:center;">26</div>
<div style="position:absolute;top:636px;line-height:20px;height:20px;font-size:11.5px;white-space:pre;color:#1c1c1c;left:-188px;width:400px;text-align:center;">27</div>
<div style="position:absolute;top:654px;line-height:20px;height:20px;font-size:11.5px;white-space:pre;color:#1c1c1c;left:-188px;width:400px;text-align:center;">28</div>
<div style="position:absolute;left:11px;top:257px;width:2px;height:1px;background:#3a4f8a;"></div>
<div style="position:absolute;left:24px;top:408px;width:678px;height:17px;background:#c0c0c0;"></div>
<div style="position:absolute;left:24px;top:407px;width:679px;height:1px;background:#000;"></div>
<div style="position:absolute;left:24px;top:425px;width:679px;height:1px;background:#000;"></div>
<div style="position:absolute;left:24px;top:443px;width:679px;height:1px;background:#000;"></div>
<div style="position:absolute;left:24px;top:476px;width:679px;height:1px;background:#000;"></div>
<div style="position:absolute;left:58px;top:407px;width:1px;height:70px;background:#000;"></div>
<div style="position:absolute;left:352px;top:407px;width:1px;height:70px;background:#000;"></div>
<div style="position:absolute;left:407px;top:407px;width:1px;height:70px;background:#000;"></div>
<div style="position:absolute;left:492px;top:407px;width:1px;height:70px;background:#000;"></div>
<div style="position:absolute;left:597px;top:407px;width:1px;height:70px;background:#000;"></div>
<div style="position:absolute;left:702px;top:407px;width:1px;height:70px;background:#000;"></div>
<div style="position:absolute;left:597px;top:497px;width:106px;height:1px;background:#000;"></div>
<div style="position:absolute;left:597px;top:518px;width:106px;height:1px;background:#000;"></div>
<div style="position:absolute;left:597px;top:539px;width:106px;height:1px;background:#000;"></div>
<div style="position:absolute;left:597px;top:476px;width:1px;height:64px;background:#000;"></div>
<div style="position:absolute;left:702px;top:476px;width:1px;height:64px;background:#000;"></div>
<div style="position:absolute;left:492px;top:653px;width:211px;height:1px;background:#000;"></div>
<div style="position:absolute;left:22px;top:132px;width:38px;height:21px;border:2px solid #1b6e3f;"></div>
<div style="position:absolute;left:55px;top:148px;width:6px;height:6px;background:#fff;"></div>
<div style="position:absolute;left:56px;top:149px;width:5px;height:5px;background:#1b6e3f;"></div>
<div style="position:absolute;top:133px;line-height:20px;height:20px;font-size:13.33px;white-space:pre;color:#000;font-weight:bold;letter-spacing:-0.025px;left:61px;text-decoration:underline;text-underline-offset:1px;text-decoration-thickness:1px;">Постачальник</div>
<div style="position:absolute;top:133px;line-height:20px;height:20px;font-size:13.33px;white-space:pre;color:#000;letter-spacing:-0.237px;left:187px;">ТОВАРИСТВО З ОБМЕЖЕНОЮ ВІДПОВІДАЛЬНІСТЮ "АЗОВІНХОЛДИНГ"</div>
<div style="position:absolute;top:151px;line-height:20px;height:20px;font-size:13.33px;white-space:pre;color:#000;letter-spacing:-0.305px;left:187px;">ЄДРПОУ 35214424, тел. 0629519024</div>
<div style="position:absolute;top:169px;line-height:20px;height:20px;font-size:13.33px;white-space:pre;color:#000;letter-spacing:-0.083px;left:187px;">Р/р  в</div>
<div style="position:absolute;top:187px;line-height:20px;height:20px;font-size:13.33px;white-space:pre;color:#000;letter-spacing:-0.301px;left:187px;">ІПН 352144205843, номер свідоцтва</div>
<div style="position:absolute;top:205px;line-height:20px;height:20px;font-size:13.33px;white-space:pre;color:#000;letter-spacing:-0.167px;left:187px;">Не є платником податку на прибуток на загальних підставах</div>
<div style="position:absolute;top:223px;line-height:20px;height:20px;font-size:13.33px;white-space:pre;color:#000;letter-spacing:-0.179px;left:187px;">Адреса 87535, Донецька обл., місто Маріуполь, ПЛОЩА МАШИНОБУДІВЕЛЬНИКІВ,</div>
<div style="position:absolute;top:240px;line-height:20px;height:20px;font-size:13.33px;white-space:pre;color:#000;letter-spacing:-0.224px;left:187px;">будинок 1</div>
<div style="position:absolute;top:261px;line-height:20px;height:20px;font-size:13.33px;white-space:pre;color:#000;font-weight:bold;letter-spacing:0.158px;left:61px;text-decoration:underline;text-underline-offset:1px;text-decoration-thickness:1px;">Одержувач</div>
<div style="position:absolute;top:261px;line-height:20px;height:20px;font-size:13.33px;white-space:pre;color:#000;letter-spacing:-0.035px;left:187px;">ФОП Адмінов В.С.</div>
<div style="position:absolute;top:279px;line-height:20px;height:20px;font-size:13.33px;white-space:pre;color:#000;letter-spacing:-0.385px;left:187px;">тел. (0629) 34-45-67</div>
<div style="position:absolute;top:297px;line-height:20px;height:20px;font-size:13.33px;white-space:pre;color:#000;font-weight:bold;letter-spacing:-0.129px;left:61px;text-decoration:underline;text-underline-offset:1px;text-decoration-thickness:1px;">Платник</div>
<div style="position:absolute;top:297px;line-height:20px;height:20px;font-size:13.33px;white-space:pre;color:#000;letter-spacing:-0.295px;left:187px;">той самий</div>
<div style="position:absolute;top:315px;line-height:20px;height:20px;font-size:13.33px;white-space:pre;color:#000;font-weight:bold;letter-spacing:-0.019px;left:61px;text-decoration:underline;text-underline-offset:1px;text-decoration-thickness:1px;">Замовлення</div>
<div style="position:absolute;top:315px;line-height:20px;height:20px;font-size:13.33px;white-space:pre;color:#000;letter-spacing:-0.194px;left:187px;">Договір № ДГ-0000006 від 09.04.20</div>
<div style="position:absolute;top:351px;line-height:20px;height:20px;font-size:16px;white-space:pre;color:#000;font-weight:bold;letter-spacing:0.069px;left:163.5px;width:400px;text-align:center;text-indent:0.069px;">Рахунок-фактура № 555</div>
<div style="position:absolute;top:373px;line-height:20px;height:20px;font-size:16px;white-space:pre;color:#000;font-weight:bold;letter-spacing:0.045px;left:163.5px;width:400px;text-align:center;text-indent:0.045px;">від 11 Лютого 2026 р.</div>
<div style="position:absolute;top:407px;line-height:20px;height:20px;font-size:13.33px;white-space:pre;color:#000;font-weight:bold;left:-158.5px;width:400px;text-align:center;">№</div>
<div style="position:absolute;top:407px;line-height:20px;height:20px;font-size:13.33px;white-space:pre;color:#000;font-weight:bold;left:5.5px;width:400px;text-align:center;">Назва</div>
<div style="position:absolute;top:407px;line-height:20px;height:20px;font-size:13.33px;white-space:pre;color:#000;font-weight:bold;left:179.5px;width:400px;text-align:center;">Од.</div>
<div style="position:absolute;top:407px;line-height:20px;height:20px;font-size:13.33px;white-space:pre;color:#000;font-weight:bold;left:250px;width:400px;text-align:center;">Кількість</div>
<div style="position:absolute;top:407px;line-height:20px;height:20px;font-size:13.33px;white-space:pre;color:#000;font-weight:bold;letter-spacing:0.06px;left:345px;width:400px;text-align:center;text-indent:0.06px;">Ціна без ПДВ</div>
<div style="position:absolute;top:407px;line-height:20px;height:20px;font-size:13.33px;white-space:pre;color:#000;font-weight:bold;letter-spacing:-0.07px;left:450px;width:400px;text-align:center;text-indent:-0.07px;">Сума без ПДВ</div>
<div style="position:absolute;top:425px;line-height:20px;height:20px;font-size:13.33px;white-space:pre;color:#000;right:690px;text-align:right;">1</div>
<div style="position:absolute;top:425px;line-height:20px;height:20px;font-size:13.33px;white-space:pre;color:#000;letter-spacing:-0.23px;left:61px;">Налаштування ПЗ</div>
<div style="position:absolute;top:425px;line-height:20px;height:20px;font-size:13.33px;white-space:pre;color:#000;left:179.5px;width:400px;text-align:center;">шт.</div>
<div style="position:absolute;top:425px;line-height:20px;height:20px;font-size:13.33px;white-space:pre;color:#000;letter-spacing:-0.372px;right:256px;text-align:right;margin-right:0.372px;">1,000</div>
<div style="position:absolute;top:425px;line-height:20px;height:20px;font-size:13.33px;white-space:pre;color:#000;letter-spacing:-0.387px;right:151px;text-align:right;margin-right:0.387px;">166,6667</div>
<div style="position:absolute;top:425px;line-height:20px;height:20px;font-size:13.33px;white-space:pre;color:#000;letter-spacing:-0.461px;right:46px;text-align:right;margin-right:0.461px;">166,67</div>
<div style="position:absolute;top:451px;line-height:20px;height:20px;font-size:13.33px;white-space:pre;color:#000;right:690px;text-align:right;">2</div>
<div style="position:absolute;top:443px;line-height:20px;height:20px;font-size:13.33px;white-space:pre;color:#000;letter-spacing:-0.29px;left:61px;">Аналіз і обробка інформації на електронному</div>
<div style="position:absolute;top:459px;line-height:20px;height:20px;font-size:13.33px;white-space:pre;color:#000;letter-spacing:-0.222px;left:61px;">носії замовника</div>
<div style="position:absolute;top:451px;line-height:20px;height:20px;font-size:13.33px;white-space:pre;color:#000;left:179.5px;width:400px;text-align:center;">час</div>
<div style="position:absolute;top:451px;line-height:20px;height:20px;font-size:13.33px;white-space:pre;color:#000;letter-spacing:-0.378px;right:256px;text-align:right;margin-right:0.378px;">10,000</div>
<div style="position:absolute;top:451px;line-height:20px;height:20px;font-size:13.33px;white-space:pre;color:#000;letter-spacing:-0.391px;right:151px;text-align:right;margin-right:0.391px;">1200,0000</div>
<div style="position:absolute;top:451px;line-height:20px;height:20px;font-size:13.33px;white-space:pre;color:#000;letter-spacing:-0.387px;right:46px;text-align:right;margin-right:0.387px;">12000,00</div>
<div style="position:absolute;top:478px;line-height:20px;height:20px;font-size:14.67px;white-space:pre;color:#000;font-weight:bold;letter-spacing:0.177px;right:154px;text-align:right;margin-right:-0.177px;">Разом без ПДВ:</div>
<div style="position:absolute;top:499px;line-height:20px;height:20px;font-size:14.67px;white-space:pre;color:#000;font-weight:bold;letter-spacing:0.137px;right:154px;text-align:right;margin-right:-0.137px;">ПДВ:</div>
<div style="position:absolute;top:520px;line-height:20px;height:20px;font-size:14.67px;white-space:pre;color:#000;font-weight:bold;letter-spacing:0.12px;right:154px;text-align:right;margin-right:-0.12px;">Всього з ПДВ:</div>
<div style="position:absolute;top:478px;line-height:20px;height:20px;font-size:14.67px;white-space:pre;color:#000;font-weight:bold;letter-spacing:-0.268px;right:46px;text-align:right;margin-right:0.268px;">12166,67</div>
<div style="position:absolute;top:499px;line-height:20px;height:20px;font-size:14.67px;white-space:pre;color:#000;font-weight:bold;letter-spacing:-0.212px;right:46px;text-align:right;margin-right:0.212px;">2433,33</div>
<div style="position:absolute;top:520px;line-height:20px;height:20px;font-size:14.67px;white-space:pre;color:#000;font-weight:bold;letter-spacing:-0.268px;right:46px;text-align:right;margin-right:0.268px;">14600,00</div>
<div style="position:absolute;top:557px;line-height:20px;height:20px;font-size:14.67px;white-space:pre;color:#000;letter-spacing:-0.04px;left:26px;">Всього на суму:</div>
<div style="position:absolute;top:577px;line-height:20px;height:20px;font-size:14.67px;white-space:pre;color:#000;font-weight:bold;letter-spacing:-0.016px;left:26px;">Чотирнадцять тисяч шістсот гривень 00 копійок</div>
<div style="position:absolute;top:599px;line-height:20px;height:20px;font-size:14.67px;white-space:pre;color:#000;letter-spacing:-0.203px;left:26px;">ПДВ:</div>
<div style="position:absolute;top:599px;line-height:20px;height:20px;font-size:14.67px;white-space:pre;color:#000;letter-spacing:-0.185px;left:84px;">2433.33 грн.</div>
<div style="position:absolute;top:635px;line-height:20px;height:20px;font-size:14.67px;white-space:pre;color:#000;left:355px;">Виписав(ла):</div>
<div style="position:absolute;left:726px;top:119px;width:17px;height:553px;background:#f5f5f5;border-radius:8.5px;"></div>
<svg style="position:absolute;left:729px;top:123px" width="11" height="9" viewBox="0 0 11 9"><path d="M5.5 1.2L10 7.3Q10.3 8 9.5 8H1.5Q.7 8 1 7.3z" fill="#737373"/></svg>
<div style="position:absolute;left:730px;top:136px;width:9px;height:504px;background:#737373;border-radius:4.5px;"></div>
<svg style="position:absolute;left:729px;top:660px" width="11" height="9" viewBox="0 0 11 9"><path d="M5.5 7.8L10 1.7Q10.3 1 9.5 1H1.5Q.7 1 1 1.7z" fill="#737373"/></svg>
<svg style="position:absolute;left:26px;top:679px" width="7" height="10" viewBox="0 0 7 10"><path d="M6 .8v8.4L1 5z" fill="#c6c6c6"/></svg>
<svg style="position:absolute;left:56px;top:679px" width="7" height="10" viewBox="0 0 7 10"><path d="M1 .8v8.4L6 5z" fill="#c6c6c6"/></svg>
<div style="position:absolute;left:101px;top:670px;width:25px;height:24px;background:#fff;"></div>
<div style="position:absolute;left:101px;top:670px;width:1px;height:23px;background:#b4b4b4;"></div>
<div style="position:absolute;left:101px;top:693px;width:25px;height:2px;background:#1b6e3f;"></div>
<div style="position:absolute;left:101px;top:670px;width:25px;height:23px;overflow:hidden"><div style="position:absolute;left:12px;top:3px;line-height:20px;font-size:13.5px;font-weight:bold;color:#1e7145;white-space:pre">Лист1</div></div>
<svg style="position:absolute;left:158px;top:675px" width="18" height="18" viewBox="0 0 18 18"><circle cx="9" cy="9" r="7.6" fill="none" stroke="#777" stroke-width="1.1"/><path d="M9 5v8M5 9h8" stroke="#555" stroke-width="1.2"/></svg>
<div style="position:absolute;left:195px;top:680px;width:2px;height:2px;background:#222;"></div>
<div style="position:absolute;left:195px;top:684px;width:2px;height:2px;background:#222;"></div>
<div style="position:absolute;left:195px;top:688px;width:2px;height:2px;background:#222;"></div>
<div style="position:absolute;left:210px;top:675px;width:516px;height:17px;background:#f5f5f5;border-radius:8.5px;"></div>
<svg style="position:absolute;left:214px;top:678px" width="9" height="11" viewBox="0 0 9 11"><path d="M1.2 5.5L7.3 1Q8 .7 8 1.5V9.5Q8 10.3 7.3 10z" fill="#737373"/></svg>
<div style="position:absolute;left:227px;top:679px;width:455.5px;height:9px;background:#737373;border-radius:4.5px;"></div>
<svg style="position:absolute;left:713px;top:678px" width="9" height="11" viewBox="0 0 9 11"><path d="M7.8 5.5L1.7 1Q1 .7 1 1.5V9.5Q1 10.3 1.7 10z" fill="#737373"/></svg>
<div style="position:absolute;left:1px;top:699px;width:744px;height:21px;background:#f3f3f3;border-radius:0 0 6px 6px;"></div>
<div style="position:absolute;left:1px;top:698px;width:744px;height:1px;background:#d6d6d6;"></div>
<div style="position:absolute;top:700px;line-height:20px;height:20px;font-size:11.2px;white-space:pre;color:#262626;letter-spacing:0.326px;left:12px;">Готово</div>
<svg style="position:absolute;left:69px;top:702px" width="15" height="14" viewBox="0 0 15 14">
<path d="M5.500 12H.6V1.100h13.200V5.500" fill="none" stroke="#262626" stroke-width="1.2"/>
<path d="M.6 3.600h13.200" stroke="#262626" stroke-width="1"/>
<path d="M2.300 6.700h3M2.300 9.200h2.300" stroke="#262626" stroke-width="1.1"/>
<circle cx="9.800" cy="9.500" r="3.800" fill="#f3f3f3" stroke="#262626" stroke-width="1.2"/><circle cx="9.800" cy="9.500" r="1.800" fill="#262626"/></svg>
<svg style="position:absolute;left:99.5px;top:701.5px" width="15.5" height="14.6" viewBox="0 0 17 16">
<g fill="none" stroke="#262626" stroke-width="1.1" stroke-linecap="round" stroke-linejoin="round">
<circle cx="6.900" cy="2.900" r="1.700"/>
<path d="M1.500 4.900Q4.200 6.600 6.900 6.600Q9.600 6.600 12.300 4.900"/>
<path d="M5.100 6.500V9.700L3.500 14.400M8.700 6.500V9.700L9.900 14.400"/>
<path d="M5.200 10Q6.900 8.700 8.600 10"/>
<path d="M12.200 10.100q0-1.800 1.700-1.800t1.700 1.600q0 1-1 1.500-.7.400-.7 1.300" stroke-width="1.150"/>
</g><circle cx="13.900" cy="14.700" r=".8" fill="#262626"/></svg>
<div style="position:absolute;top:700px;line-height:20px;height:20px;font-size:11.2px;white-space:pre;color:#262626;letter-spacing:0.258px;left:118px;">Специальные возможности: не поддерживаются</div>
<div style="position:absolute;left:431px;top:699px;width:40px;height:21px;background:#dcdcdc;"></div>
<svg style="position:absolute;left:444px;top:702px" width="13" height="13" viewBox="0 0 13 13">
<path d="M.6 .6h11.8v11.8H.6zM.6 4.5h11.8M.6 8.5h11.8M4.5 .6v11.8M8.5 .6v11.8" fill="none" stroke="#262626" stroke-width="1.2"/></svg>
<svg style="position:absolute;left:484px;top:702px" width="14" height="13" viewBox="0 0 14 13">
<rect x=".6" y=".6" width="12.800" height="11.800" fill="none" stroke="#262626" stroke-width="1.2"/>
<rect x="3.400" y="2.900" width="7.200" height="7.200" fill="none" stroke="#262626" stroke-width="1.1"/>
<path d="M5 4.700h4M5 6.500h4M5 8.300h4" stroke="#262626" stroke-width=".9"/></svg>
<svg style="position:absolute;left:524px;top:702px" width="14" height="13" viewBox="0 0 14 13">
<rect x=".6" y=".6" width="12.800" height="11.800" fill="none" stroke="#262626" stroke-width="1.2"/>
<path d="M.6 7.700H8.900V.6" fill="none" stroke="#262626" stroke-width="1.2"/>
<path d="M3.500 .6V6M6.200 .6V6" fill="none" stroke="#262626" stroke-width="1"/></svg>
<div style="position:absolute;left:557px;top:708px;width:8px;height:1px;background:#262626;"></div>
<div style="position:absolute;left:571px;top:708px;width:99px;height:1px;background:#777;"></div>
<div style="position:absolute;left:619px;top:702px;width:4px;height:13px;background:#555;border-radius:1px;"></div>
<div style="position:absolute;left:675px;top:708px;width:8px;height:1px;background:#262626;"></div>
<div style="position:absolute;left:678.5px;top:704.5px;width:1px;height:8px;background:#262626;"></div>
<div style="position:absolute;top:700px;line-height:20px;height:20px;font-size:11.2px;white-space:pre;color:#262626;letter-spacing:-0.347px;left:697px;">100 %</div>
</div></body></html>
